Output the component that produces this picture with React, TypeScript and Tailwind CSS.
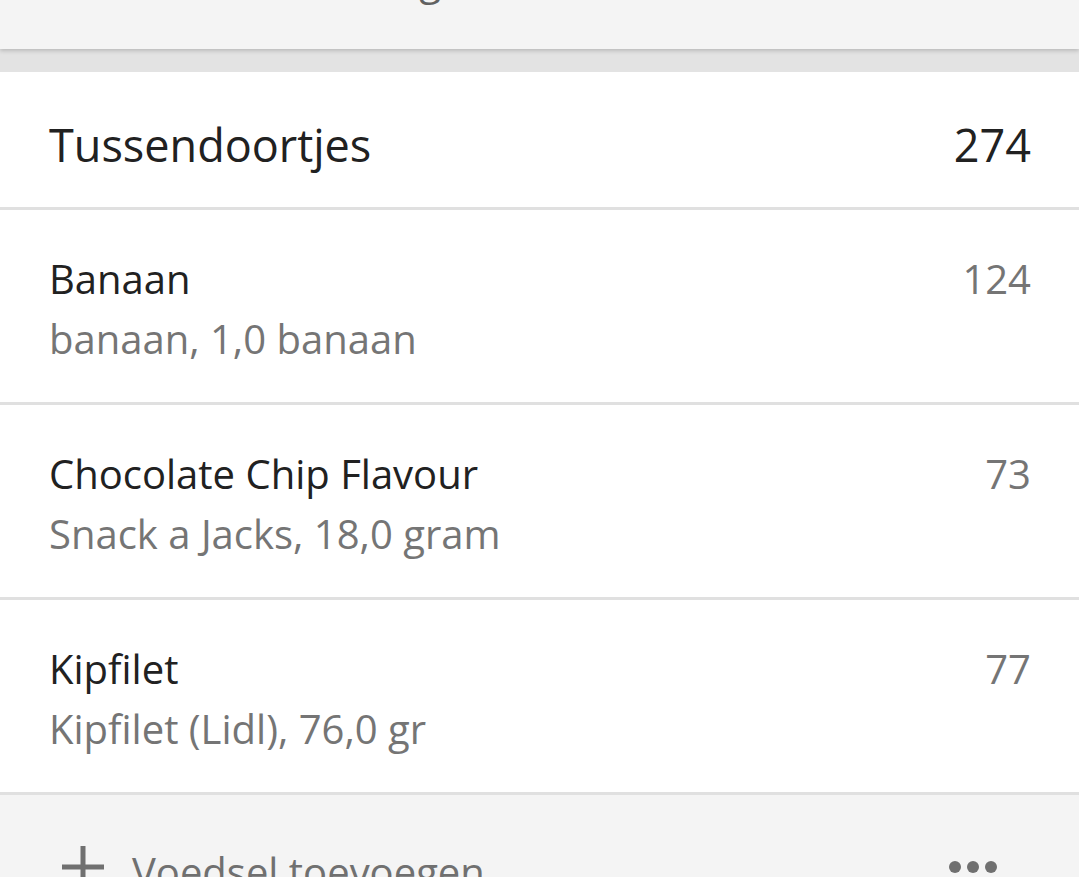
import { FC } from "react";

interface IItem {
  title: string;
  sub: string;
  kcal: number;
}

const items: IItem[] = [
  { title: "Banaan", sub: "banaan, 1,0 banaan", kcal: 124 },
  { title: "Chocolate Chip Flavour", sub: "Snack a Jacks, 18,0 gram", kcal: 73 },
  { title: "Kipfilet", sub: "Kipfilet (Lidl), 76,0 gr", kcal: 77 },
];

const Row: FC<IItem> = ({ title, sub, kcal }) => (
  <div className="flex justify-between items-start h-[195px] pt-[39px] pl-[49px] pr-[48px] bg-white border-b-[3px] border-[#e0e0e0]">
    <div className="flex flex-col leading-[60px]">
      <span className="text-[#212121]">{title}</span>
      <span className="text-[#757575]">{sub}</span>
    </div>
    <span className="leading-[60px] text-[#757575]">{kcal}</span>
  </div>
);

export default function App() {
  return (
    <div className="w-[1079px] h-[877px] overflow-hidden bg-[#e3e3e3] text-[40px] font-['Open_Sans',sans-serif]">
      <div className="relative z-10 h-[49px] overflow-hidden bg-[#f4f4f4] shadow-[0_2px_4px_rgba(0,0,0,0.18)]">
        <div className="-mt-[50px] pl-[168px] leading-[60px] text-[#616161]">Totale voeding</div>
      </div>

      <div className="mt-[23px] bg-white">
        <div className="flex justify-between items-start h-[138px] pt-[43px] pl-[49px] pr-[48px] border-b-[3px] border-[#e0e0e0] text-[45px] leading-[60px] text-[#212121]">
          <span>Tussendoortjes</span>
          <span>274</span>
        </div>
        {items.map((item, i) => (
          <Row key={i} {...item} />
        ))}
      </div>

      <div className="h-[100px] bg-[#f4f4f4] flex items-start justify-between pt-[51px] pl-[62px] pr-[82px]">
        <div className="flex items-start gap-[28px] text-[#707070] leading-[60px]">
          <svg width="42" height="42" viewBox="0 0 42 42" fill="#707070">
            <rect x="0" y="18.5" width="42" height="5" />
            <rect x="18.5" y="0" width="5" height="42" />
          </svg>
          <span className="-mt-[4px]">Voedsel toevoegen</span>
        </div>
        <div className="flex gap-[6px] mt-[15px]">
          <span className="size-[12px] rounded-full bg-[#707070]" />
          <span className="size-[12px] rounded-full bg-[#707070]" />
          <span className="size-[12px] rounded-full bg-[#707070]" />
        </div>
      </div>
    </div>
  );
}
